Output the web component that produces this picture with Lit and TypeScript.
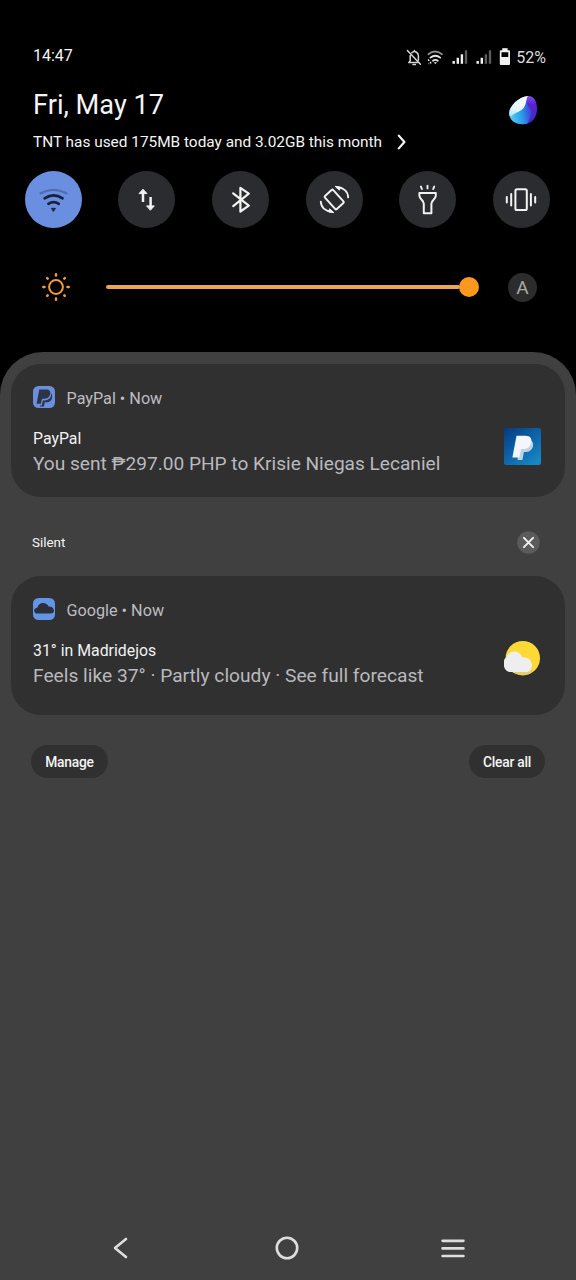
import { LitElement, html, css, svg, TemplateResult } from "lit";
import { customElement, property } from "lit/decorators.js";

const statusIcons = html`
  <svg width="104" height="22" viewBox="406 47 104 22" fill="none">
    <g stroke="#d4d4d4" stroke-width="1.5" stroke-linecap="round" stroke-linejoin="round">
      <path d="M407.4 50.6 420.400 64.2" />
      <path d="M410.2 55.400v5.400l-1.400 1.800h8.800M411.800 52.800c2.600-2.800 6.600-.4 6.600 3v4.400M414.400 51v-.6" />
      <path d="M413 64.600h2.400" />
    </g>
    <g stroke-linecap="round" stroke-width="1.800">
      <path d="M428.400 54.200q6.600-5.400 13.600 0" stroke="#8d8d8d" />
      <path d="M430.400 57.600q5-3.800 9.800 0" stroke="#e6e6e6" />
      <path d="M433 60.800q2.400-1.800 4.800 0" stroke="#e6e6e6" />
    </g>
    <path d="m433.800 62.200 1.600 2 1.600-2z" fill="#e6e6e6" />
    <path d="M428.200 59.400l.8 1.600M430.600 61.800v1.800M428.600 63.600h.6" stroke="#e6e6e6" stroke-width="1.500" />
    <g fill="#f0f0f0">
      <rect x="452.500" y="61" width="2.400" height="2.800" />
      <rect x="456.600" y="57.800" width="2.400" height="6" />
      <rect x="460.700" y="54.300" width="2.400" height="9.500" />
      <rect x="464.800" y="50.300" width="2.400" height="13.500" fill="#5c5c5c" />
      <rect x="476.500" y="61" width="2.400" height="2.800" />
      <rect x="480.600" y="57.800" width="2.400" height="6" />
      <rect x="484.700" y="54.300" width="2.400" height="9.500" fill="#5c5c5c" />
      <rect x="488.800" y="50.300" width="2.400" height="13.500" fill="#5c5c5c" />
      <rect x="502.200" y="48.200" width="5.400" height="3" />
      <path fill-rule="evenodd" d="M500.800 50.200h8.200q1 0 1 1V64q0 1-1 1h-8.200q-1 0-1-1V51.200q0-1 1-1zM501.500 52.200v4.900h6.800v-4.900z" />
    </g>
  </svg>
`;

const orb = html`
  <svg width="32" height="32" viewBox="507 94 32 32">
    <defs>
      <linearGradient id="violet" x1="0.5" y1="0" x2="0.6" y2="1">
        <stop offset="0" stop-color="#8a66e4" />
        <stop offset="0.35" stop-color="#5a22d0" />
        <stop offset="1" stop-color="#3f2ac8" />
      </linearGradient>
      <linearGradient id="aqua" gradientUnits="userSpaceOnUse" x1="510" y1="116" x2="533" y2="112">
        <stop offset="0" stop-color="#4fd0f0" />
        <stop offset="0.500" stop-color="#2a9cec" />
        <stop offset="1" stop-color="#4a2cd0" />
      </linearGradient>
      <linearGradient id="pearl" x1="0.7" y1="0" x2="0.3" y2="1">
        <stop offset="0" stop-color="#ffffff" />
        <stop offset="0.700" stop-color="#e4f6f8" />
        <stop offset="1" stop-color="#a8e4f2" />
      </linearGradient>
      <clipPath id="orbShape">
        <path d="M527.500 96c6-.8 9.300 4.600 9.500 12.200.2 8.400-4.400 16-14.200 16-8 0-13.400-4.400-13.600-11 .2-7.600 9.600-16.200 18.300-17.200z" />
      </clipPath>
    </defs>
    <g clip-path="url(#orbShape)">
      <rect x="507" y="94" width="32" height="32" fill="url(#violet)" />
      <path d="M507 108h16c2-2 2.500-6 3.500-9 .5 6 3 9 5.500 12-1 5-3 10-6 15h-19z" fill="url(#aqua)" />
      <path d="M507 94h22c-3.500 4.500-2 9-5 13.500-2.600 3.900-8 4.500-12.500 8.500l-4.500 1z" fill="url(#pearl)" />
    </g>
  </svg>
`;

const tileIcons: { name: string; active?: boolean; glyph: TemplateResult }[] = [
  {
    name: "Wi-Fi",
    active: true,
    glyph: svg`
      <path d="M15.600 22.200q13-6.800 26 0" stroke="#4e6cb0" stroke-width="2.300" />
      <path d="M19.600 27.400q9-6 18 0M23.400 32.800q5.200-3.400 10.400 0" stroke="#16223c" stroke-width="2.600" />
      <path d="M26.600 37.300h3.900l-1.950 3z" fill="#16223c" stroke="#16223c" stroke-width=".8" />`,
  },
  {
    name: "Mobile data",
    glyph: svg`
      <path d="M25 31V20M32.600 26v11" stroke-width="2.500" stroke-linecap="butt" />
      <path d="M21.300 22.300 25 18.200l3.700 4.100zM28.900 34.900h7.400L32.600 39z" fill="#f2f2f2" stroke-width="1" />`,
  },
  {
    name: "Bluetooth",
    glyph: svg`<path d="m21.200 22.300 15.600 12.400-8.400 5.800V16.800l8.400 5.900-15.600 12.400" stroke-width="2.200" />`,
  },
  {
    name: "Auto-rotate",
    glyph: svg`
      <rect x="-5.600" y="-8.800" width="11.200" height="17.600" rx="1.200" transform="translate(28.200 28.500) rotate(-42)" />
      <path d="M31 16.300c6.400.2 10.800 4 11.200 10.100M26 40.700c-6.400-.2-10.800-4-11.200-10.100" stroke-width="1.900" />
      <path d="m29.400 15.600 4 3.600.7-2.800zM27.600 41.400l-4-3.600-.7 2.800z" fill="#f2f2f2" stroke-width="1" />`,
  },
  {
    name: "Flashlight",
    glyph: svg`
      <path d="M20.400 22h16.400v2.800c0 3.400-4.400 4-4.400 8v9.400h-7.600v-9.400c0-4-4.400-4.600-4.400-8z" />
      <path d="M28.500 14.700v2.700M21.900 15.600l1 2.400M35.200 15.600l-1 2.400" stroke-width="1.900" />`,
  },
  {
    name: "Vibrate",
    glyph: svg`
      <rect x="22.400" y="18.300" width="11.400" height="20.800" rx="1.600" />
      <path d="M18.200 23v11.500M13.800 26v5.600M37.900 23v11.500M42.200 26v5.600" stroke-width="2" />`,
  },
];

const paypalBadge = html`
  <svg width="22" height="22" viewBox="0 0 22 22">
    <rect width="22" height="22" rx="5.500" fill="#6c8fdc" />
    <path d="M6.300 3.400h6.700c3.400 0 4.900 2 4.200 4.800-.8 3.200-3.200 4.600-6.400 4.600H9l-1.100 5H3.600z" fill="#2b3448" />
    <path d="M18.100 7c.7 4.800-2.600 7.400-7 7.400h-1.200l-1.100 5H7l-.3 1.200h4.100l1-4.400h1.400c3.700 0 5.900-2.200 5.900-5.800 0-1.500-.3-2.600-1-3.400z" fill="#2b3448" />
  </svg>
`;

const cloudBadge = html`
  <svg width="22" height="22" viewBox="0 0 22 22">
    <rect width="22" height="22" rx="5.500" fill="#6394e6" />
    <path d="M4.600 15.600c-4.400 0-4.600-5.400-.4-5.900C5.600 3.700 13.600 3.400 15.600 8.600c6.600-.2 7 7 1.800 7z" fill="#2b3039" />
  </svg>
`;

const paypalThumb = html`
  <svg width="37" height="37" viewBox="0 0 37 37">
    <defs>
      <linearGradient id="ppBlue" x1="0" y1="0" x2="0.8" y2="1">
        <stop offset="0" stop-color="#053a80" />
        <stop offset="0.500" stop-color="#0d61a6" />
        <stop offset="1" stop-color="#1787c4" />
      </linearGradient>
    </defs>
    <rect width="37" height="37" rx="2.500" fill="url(#ppBlue)" />
    <path d="M15 12h9c4.500 0 5.800 3.200 4.900 6.500-1.100 4-4 5.600-8 5.600h-1l-1.500 8h-4.800z" fill="#bcd3e4" />
    <path d="M12.500 7.800h8.700c5 0 7 2.800 6 7-1.100 4.600-4.300 6.300-8.600 6.300H17l-1.700 8.400H8.400z" fill="#f3f7fb" />
  </svg>
`;

const weatherThumb = html`
  <svg width="37" height="37" viewBox="0 0 37 37">
    <circle cx="18.800" cy="18.200" r="17.200" fill="#fdd935" />
    <path d="M8 32h15.500c2.700 0 5-1.900 5-4.600 1.400 3-1.100 6.800-5.500 6.800-5.500.8-11 .4-15-2.200z" fill="#e3cf6d" />
    <path d="M7 32C-1.600 32-2.200 19.400 2.600 17.200 4.500 10.200 15.500 9.200 18.200 17.400c11.400-1.600 13.200 14.600 3.200 14.600z" fill="#eeeeee" />
  </svg>
`;

@customElement("qs-tile")
class QsTile extends LitElement {
  @property({ type: Boolean }) active = false;
  @property() label = "";
  @property({ attribute: false }) glyph?: TemplateResult;

  static styles = css`
    :host { display: block; }
    .tile { display: block; width: 57px; height: 57px; padding: 0; border: 0; border-radius: 50%; background: #2b2c2f; }
    .tile.active { background: #6b8fe0; }
    svg { display: block; fill: none; stroke: #f2f2f2; stroke-width: 2; stroke-linecap: round; stroke-linejoin: round; }
  `;

  render() {
    return html`<button class="tile ${this.active ? "active" : ""}" aria-label=${this.label}>
      <svg width="57" height="57" viewBox="0 0 57 57">${this.glyph}</svg>
    </button>`;
  }
}

@customElement("notification-card")
class NotificationCard extends LitElement {
  @property() app = "";
  @property() heading = "";
  @property() body = "";
  @property({ attribute: false }) badge?: TemplateResult;
  @property({ attribute: false }) thumb?: TemplateResult;

  static styles = css`
    :host { display: block; box-sizing: border-box; background: #303030; border-radius: 30px; padding: 22px 24px 0 22px; }
    .head { display: flex; align-items: center; height: 22px; gap: 11.500px; color: #bdbdc1; font-size: 16.200px; }
    .head span { padding-top: 2px; }
    .content { display: flex; align-items: center; justify-content: space-between; height: 52px; margin-top: 18px; }
    .lines { align-self: flex-start; }
    .title { font-size: 15.850px; line-height: 26px; color: #f2f2f2; }
    .text { font-size: var(--text-size, 19.100px); line-height: 24px; color: #b9b9bd; }
    .thumb { height: 37px; margin-bottom: 11px; }
    svg { display: block; }
  `;

  render() {
    return html`
      <div class="head">${this.badge}<span>${this.app} • Now</span></div>
      <div class="content">
        <div class="lines">
          <div class="title">${this.heading}</div>
          <div class="text">${this.body}</div>
        </div>
        <div class="thumb">${this.thumb}</div>
      </div>
    `;
  }
}

@customElement("app-root")
class AppRoot extends LitElement {
  static styles = css`
    :host { display: flex; flex-direction: column; width: 576px; height: 1280px; overflow: hidden; background: #000; color: #f4f4f4; font-family: Roboto, "Liberation Sans", sans-serif; white-space: nowrap; }
    svg { display: block; }
    button { font-family: inherit; border: 0; padding: 0; }
    .status { display: flex; align-items: center; justify-content: space-between; height: 43px; margin-top: 36px; padding: 0 30px 0 33px; font-size: 16px; }
    .clock { margin-bottom: 4px; }
    .indicators { display: flex; align-items: center; gap: 6px; color: #dcdcdc; }
    .date { display: flex; align-items: center; justify-content: space-between; height: 52px; padding: 0 37px 0 33px; font-size: 27.200px; }
    .date svg { margin-top: 9px; }
    .usage { display: flex; align-items: center; gap: 15px; height: 21px; padding-left: 33px; font-size: 15.380px; }
    .tiles { display: flex; justify-content: space-between; margin-top: 19px; padding: 0 26px 0 24.500px; }
    .brightness { display: flex; align-items: center; height: 32px; margin-top: 43px; padding: 0 39px 0 41px; }
    .slider { display: flex; align-items: center; width: 373px; margin: 0 29px 0 35px; }
    .track { flex: 1; height: 4px; border-radius: 2px; background: #e9a753; margin-right: -1px; }
    .knob { width: 20px; height: 20px; border-radius: 50%; background: #fd981f; }
    .auto { display: grid; place-items: center; width: 29px; height: 29px; border-radius: 50%; background: #2c2c2c; color: #a9a9a9; font-size: 19px; }
    .sheet { display: flex; flex-direction: column; flex: 1; margin-top: 49px; padding: 12px 11px 0; border-radius: 43px 43px 0 0; background: #404040; }
    .first { height: 133px; }
    .second { height: 139px; --text-size: 19.200px; }
    .silent { display: flex; align-items: center; justify-content: space-between; height: 79px; padding: 12px 25px 0 21px; box-sizing: border-box; font-size: 13.400px; }
    .actions { display: flex; justify-content: space-between; margin-top: 30px; padding: 0 20px; }
    .pill { height: 33px; width: 77px; border-radius: 17px; background: #303030; color: #f4f4f4; font-size: 13.800px; letter-spacing: -0.2px; font-weight: 500; }
    .pill.clear { width: 76px; letter-spacing: -0.25px; }
    .nav { margin-top: auto; height: 64px; display: flex; align-items: center; justify-content: space-between; padding: 0 100px; }
    .nav-home { margin-left: 4px; }
  `;

  render() {
    return html`
      <div class="status">
        <span class="clock">14:47</span>
        <div class="indicators">${statusIcons}<span>52%</span></div>
      </div>
      <div class="date"><span>Fri, May 17</span>${orb}</div>
      <div class="usage">
        <span>TNT has used 175MB today and 3.02GB this month</span>
        <svg width="10" height="16" viewBox="0 0 10 16" fill="none" stroke="#f4f4f4" stroke-width="2.200" stroke-linecap="round" stroke-linejoin="round"><path d="m1.800 1.600 5.600 6.400-5.600 6.400" /></svg>
      </div>
      <div class="tiles">
        ${tileIcons.map((t) => html`<qs-tile .label=${t.name} .active=${!!t.active} .glyph=${t.glyph}></qs-tile>`)}
      </div>
      <div class="brightness">
        <svg width="30" height="30" viewBox="0 0 30 30" fill="none" stroke="#f29b3c" stroke-linecap="round">
          <circle cx="15" cy="15" r="6.900" stroke-width="2" />
          <path stroke-width="2.500" d="M15 2.300v1.200M15 26.500v1.200M2.300 15h1.200M26.500 15h1.200M6.200 6.200l.5.5M23.300 23.300l.5.5M6.200 23.800l.5-.5M23.300 6.700l.5-.5" />
        </svg>
        <div class="slider"><div class="track"></div><div class="knob"></div></div>
        <div class="auto">A</div>
      </div>
      <div class="sheet">
        <notification-card class="first" app="PayPal" heading="PayPal" body="You sent ₱297.00 PHP to Krisie Niegas Lecaniel" .badge=${paypalBadge} .thumb=${paypalThumb}></notification-card>
        <div class="silent">
          <span>Silent</span>
          <svg width="23" height="23" viewBox="0 0 23 23"><circle cx="11.500" cy="11.500" r="11.200" fill="#5b5b5b" /><path d="m6.900 6.900 9.200 9.200M16.100 6.900l-9.200 9.200" stroke="#f0f0f0" stroke-width="2" stroke-linecap="round" /></svg>
        </div>
        <notification-card class="second" app="Google" heading="31° in Madridejos" body="Feels like 37° · Partly cloudy · See full forecast" .badge=${cloudBadge} .thumb=${weatherThumb}></notification-card>
        <div class="actions">
          <button class="pill">Manage</button>
          <button class="pill clear">Clear all</button>
        </div>
        <div class="nav">
          <svg width="18" height="24" viewBox="0 0 18 24" fill="none" stroke="#dedede" stroke-width="2.600" stroke-linecap="round" stroke-linejoin="round"><path d="M15 3 4 12l11 9" /></svg>
          <svg class="nav-home" width="24" height="24" viewBox="0 0 24 24" fill="none" stroke="#dedede" stroke-width="2.600"><circle cx="12" cy="12" r="10.200" /></svg>
          <svg width="24" height="24" viewBox="0 0 24 24" fill="none" stroke="#dedede" stroke-width="2.700" stroke-linecap="round"><path d="M1.600 4.800h20.800M1.600 12.400h20.800M1.600 20h20.800" /></svg>
        </div>
      </div>
    `;
  }
}
